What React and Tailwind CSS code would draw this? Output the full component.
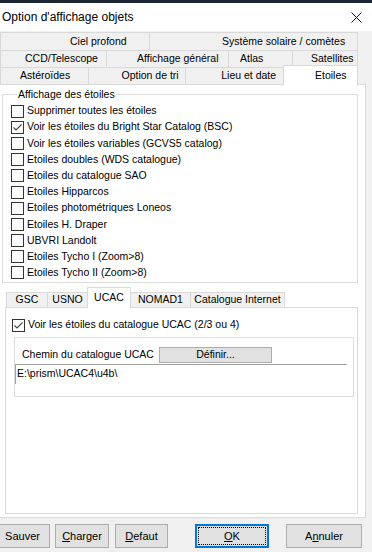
import React from 'react';

const font = "font-['Liberation_Sans',Arial,sans-serif]";

const Check = ({ checked }) => (
    <span className="w-[13px] h-[13px] border border-[#333333] bg-white shrink-0 flex items-center justify-center">
        {checked && (
            <svg width="11" height="11" viewBox="0 0 11 11">
                <polyline points="1.5,5.5 4,8 9.5,2.5" fill="none" stroke="#444" strokeWidth="1.1" />
            </svg>
        )}
    </span>
);

const starOptions = [
    ['Supprimer toutes les étoiles', false],
    ['Voir les étoiles du Bright Star Catalog (BSC)', true],
    ['Voir les étoiles variables (GCVS5 catalog)', false],
    ['Etoiles doubles (WDS catalogue)', false],
    ['Etoiles du catalogue SAO', false],
    ['Etoiles Hipparcos', false],
    ['Etoiles photométriques Loneos', false],
    ['Etoiles H. Draper', false],
    ['UBVRI Landolt', false],
    ['Etoiles Tycho I (Zoom>8)', false],
    ['Etoiles Tycho II (Zoom>8)', false],
];

const subTabs = [
    { label: 'GSC', w: 'w-[42px]' },
    { label: 'USNO', w: 'w-[41px]' },
    { label: 'UCAC', w: 'w-[44px]', active: true },
    { label: 'NOMAD1', w: 'w-[61px]' },
    { label: 'Catalogue Internet', w: 'w-[95px]' },
];

const Tab = ({ className, children }) => (
    <div className={`h-full border-r border-[#d9d9d9] flex items-center whitespace-nowrap ${className}`}>
        {children}
    </div>
);

const Button = ({ className, children }) => (
    <div className={`h-[24px] bg-[#e1e1e1] border border-[#adadad] flex items-center justify-center ${className}`}>
        {children}
    </div>
);

const App = () => {
    return (
        <div className={`w-[372px] h-[552px] bg-[#f0f0f0] overflow-hidden text-[10.5px] text-black whitespace-nowrap ${font}`}>
            <div className="h-[3px] bg-[#1b2733]" />
            <div className="h-[28px] bg-white flex items-center justify-between pl-[2px] pr-[10px]">
                <span className="text-[12px]">Option d'affichage objets</span>
                <svg width="11" height="11" viewBox="0 0 11 11">
                    <path d="M0.5 0.5 L10.5 10.5 M10.5 0.5 L0.5 10.5" stroke="#111" strokeWidth="1" />
                </svg>
            </div>

            {/* tab rows */}
            <div className="pt-[1px]">
                <div className="flex h-[18px] w-[358px] border-t border-l border-[#d9d9d9]">
                    <Tab className="w-[149px] pl-[69px]">Ciel profond</Tab>
                    <Tab className="w-[208px] pl-[72px]">Système solaire / comètes</Tab>
                </div>
                <div className="flex h-[17px] w-[358px] border-t border-l border-[#d9d9d9]">
                    <Tab className="w-[106px] pl-[24px]">CCD/Telescope</Tab>
                    <Tab className="w-[122px] pl-[30px]">Affichage général</Tab>
                    <Tab className="w-[64px] pl-[11px]">Atlas</Tab>
                    <Tab className="w-[65px] pl-[18px]">Satellites</Tab>
                </div>
                <div className="flex h-[17px] w-[358px] border-t border-l border-[#d9d9d9]">
                    <Tab className="w-[92px] pl-[19px]">Astéroïdes</Tab>
                    <Tab className="w-[100px] pl-[32px]">Option de tri</Tab>
                    <Tab className="w-[102px] pl-[35px]">Lieu et date</Tab>
                    <div className="relative z-10 -ml-[2px] -mt-[3px] w-[75px] h-[21px] shrink-0 bg-white border-t border-l border-r border-[#d9d9d9] pl-[31px] pt-[2px]">
                        Etoiles
                    </div>
                </div>
            </div>

            {/* main panel */}
            <div className="w-[366px] h-[434px] bg-white border-t border-r border-b border-[#d9d9d9]">
                <fieldset className="mt-[3px] ml-[2px] w-[356px] border border-[#dcdcdc] pl-[8px] pb-[1px]">
                    <legend className="ml-[6px] px-[1px] leading-[13px]">Affichage des étoiles</legend>
                    <div className="mt-[2px] flex flex-col">
                        {starOptions.map(([label, checked]) => (
                            <div key={label} className="h-[16.2px] flex items-center gap-[3px]">
                                <Check checked={checked} />
                                <span>{label}</span>
                            </div>
                        ))}
                    </div>
                </fieldset>

                {/* sub tabs */}
                <div className="mt-[4px] ml-[6px] flex h-[20px] items-end">
                    {subTabs.map(t =>
                        t.active ? (
                            <div key={t.label} className={`${t.w} relative z-10 self-start h-[21px] -ml-[1px] bg-white border-t border-l border-r border-[#d9d9d9] flex justify-center pt-[2px]`}>
                                {t.label}
                            </div>
                        ) : (
                            <div key={t.label} className={`${t.w} h-[15px] bg-[#f0f0f0] border-t border-l border-r border-[#d9d9d9] flex items-center justify-center -ml-[1px] first:ml-0`}>
                                {t.label}
                            </div>
                        )
                    )}
                </div>
                <div className="ml-[5px] w-[353px] h-[207px] border border-[#d9d9d9] bg-white">
                    <div className="mt-[9px] ml-[6px] h-[16px] flex items-center gap-[3px]">
                        <Check checked />
                        <span>Voir les étoiles du catalogue UCAC (2/3 ou 4)</span>
                    </div>
                    <div className="mt-[4px] ml-[8px] w-[340px] h-[60px] border border-[#dcdcdc]">
                        <div className="mt-[9px] h-[16px] flex items-center pl-[7px]">
                            <span className="w-[137px]">Chemin du catalogue UCAC</span>
                            <div className="w-[113px] h-[16px] bg-[#e1e1e1] border border-[#adadad] flex items-center justify-center">
                                Définir...
                            </div>
                        </div>
                        <div className="mt-[1px] w-[332px] h-[20px] border-t border-l border-[#a0a0a0] pl-[1px] pt-[1px]">
                            E:\prism\UCAC4\u4b\
                        </div>
                    </div>
                </div>
            </div>

            {/* bottom buttons */}
            <div className="mt-[6px] flex -ml-[5px] text-[11px]">
                <Button className="w-[55px]">Sauver</Button>
                <Button className="w-[54px] ml-[5px]"><span><u>C</u>harger</span></Button>
                <Button className="w-[53px] ml-[6px]"><span><u>D</u>efaut</span></Button>
                <div className="relative w-[74px] ml-[27px] h-[24px] bg-[#e1e1e1] border-2 border-[#0078d7] flex items-center justify-center">
                    <span className="absolute inset-[1px] border border-dotted border-black" />
                    <span><u>O</u>K</span>
                </div>
                <Button className="w-[76px] ml-[17px]"><span>A<u>n</u>nuler</span></Button>
            </div>
        </div>
    );
};

export default App;
